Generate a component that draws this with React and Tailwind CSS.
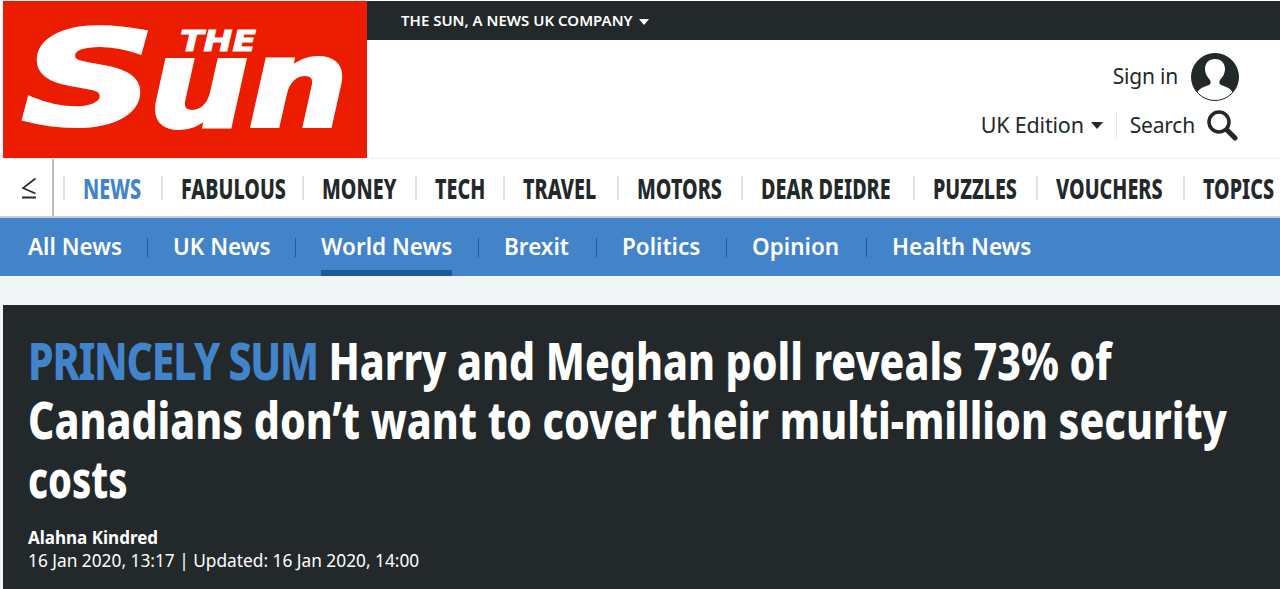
import React from 'react';

const sections = [
    { label: 'NEWS', width: 'w-[98px]', active: true },
    { label: 'FABULOUS', width: 'w-[141px]' },
    { label: 'MONEY', width: 'w-[113px]' },
    { label: 'TECH', width: 'w-[88px]' },
    { label: 'TRAVEL', width: 'w-[114px]' },
    { label: 'MOTORS', width: 'w-[124px]' },
    { label: 'DEAR DEIDRE', width: 'w-[172px]' },
    { label: 'PUZZLES', width: 'w-[123px]' },
    { label: 'VOUCHERS', width: 'w-[147px]' },
    { label: 'TOPICS .', width: 'w-[97px]' },
];

const subLinks = [
    { label: 'All News', width: 'w-[147px]', first: true },
    { label: 'UK News', width: 'w-[148px]' },
    { label: 'World News', width: 'w-[183px]', active: true },
    { label: 'Brexit', width: 'w-[118px]' },
    { label: 'Politics', width: 'w-[130px]' },
    { label: 'Opinion', width: 'w-[140px]' },
    { label: 'Health News', width: 'w-[170px]' },
];

const body = "font-['Noto_Sans',sans-serif]";
const squeezed = 'inline-block origin-left whitespace-nowrap';

function Logo() {
    return (
        <div className="w-[364px] h-[157px] shrink-0 bg-[#ec1c00]">
            <svg viewBox="0 0 364 157" className="w-full h-full" role="img" aria-label="The Sun">
                <g fill="#fff" stroke="#fff" fontStyle="italic" fontWeight="700" fontFamily="DejaVu Sans, sans-serif">
                    <text x="177" y="50" strokeWidth="1" fontSize="29" textLength="76" lengthAdjust="spacingAndGlyphs">THE</text>
                    <text x="19" y="123" strokeWidth="4" fontSize="130" textLength="133" lengthAdjust="spacingAndGlyphs">S</text>
                    <text x="146" y="125" strokeWidth="4" fontSize="122" textLength="199" lengthAdjust="spacingAndGlyphs">un</text>
                </g>
            </svg>
        </div>
    );
}

function UserIcon() {
    return (
        <svg viewBox="0 0 48 48" className="w-[48px] h-[48px]">
            <circle cx="24" cy="24" r="23.5" fill="#23282a" />
            <path d="M6 40c2-5 9-7 12-8 2-1 2-3 1-5-3-3-5-7-5-11 0-6 4-10 10-10s10 4 10 10c0 4-2 8-5 11-1 2-1 4 1 5 3 1 10 3 12 8-4 5-11 7.500-18 7.500S10 45 6 40z" fill="#fff" />
            <circle cx="24" cy="24" r="23.5" fill="none" stroke="#23282a" strokeWidth="1" />
        </svg>
    );
}

function SearchIcon() {
    return (
        <svg viewBox="0 0 32 32" className="w-[32px] h-[32px]" fill="none" stroke="#23282a">
            <circle cx="13" cy="13" r="10" strokeWidth="3.500" />
            <path d="M21 21l8 8" strokeWidth="5" strokeLinecap="round" />
        </svg>
    );
}

function BackIcon() {
    return (
        <svg viewBox="0 0 16 22" className="w-[16px] h-[22px] ml-[3px]" fill="none" stroke="#23282a" strokeWidth="1.600">
            <path d="M14.500 1.500L2 11l12.500 5.500" />
            <path d="M1 20.500h14" strokeWidth="2" />
        </svg>
    );
}

export default function App() {
    return (
        <div className="w-[1280px] h-[589px] overflow-hidden bg-[#f1f5f5] text-[#23282a]">
            <header className="flex pl-[3px] pt-px bg-white">
                <Logo />
                <div className="flex-1">
                    <div className={`h-[39px] bg-[#23282a] pl-[34px] flex items-center text-white text-[15px] font-semibold ${body}`}>
                        THE SUN, A NEWS UK COMPANY
                        <span className="ml-[6px] mt-[2px] w-0 h-0 border-x-[5px] border-x-transparent border-t-[6px] border-t-white" />
                    </div>
                    <div className={`h-[118px] pr-[42px] flex flex-col items-end tracking-[-0.2px] ${body}`}>
                        <div className="flex items-center mt-[13px] h-[48px] -mr-px">
                            <span className="text-[21px] mr-[13px]">Sign in</span>
                            <UserIcon />
                        </div>
                        <div className="flex items-center mt-[8px] h-[32px]">
                            <span className="text-[21.500px]">UK Edition</span>
                            <span className="ml-[7px] mr-[13px] w-0 h-0 border-x-[6px] border-x-transparent border-t-[7px] border-t-[#23282a]" />
                            <span className="text-[21px] pl-[13px] border-l border-[#e6e6e6] leading-[28px] mr-[11px]">Search</span>
                            <SearchIcon />
                        </div>
                    </div>
                </div>
            </header>
            <nav className="h-[60px] pl-[3px] flex items-stretch bg-white border-t border-[#eeeeee] border-b-2 border-b-[#c9ced0] overflow-hidden">
                <div className="w-[51px] shrink-0 border-r-2 border-[#bdbdbd] flex justify-center items-center">
                    <BackIcon />
                </div>
                <div className="flex items-center pl-[9px]">
                    {sections.map((s) => (
                        <div key={s.label} className={`${s.width} shrink-0 h-[24px] flex items-center pl-[18px] border-l-2 border-[#dfe2e3] text-[29px] font-extrabold ${body} ${s.active ? 'text-[#4283c9]' : 'text-[#23282a]'}`}>
                            <span className={`${squeezed} scale-x-[0.68]`}>{s.label}</span>
                        </div>
                    ))}
                </div>
            </nav>
            <div className={`h-[58px] bg-[#4283c9] flex items-center text-white text-[22.500px] font-semibold whitespace-nowrap ${body}`}>
                {subLinks.map((l) => (
                    <div key={l.label} className={`${l.width} shrink-0 h-full flex items-center ${l.first ? 'pl-[28px]' : ''}`}>
                        <span className={`h-[19px] border-l border-[#1f5a9c] ${l.first ? 'hidden' : 'mr-[25px]'}`} />
                        <span className={`h-full flex items-center border-b-[6px] pt-[6px] ${l.active ? 'border-[#1f5a94]' : 'border-transparent'}`}>{l.label}</span>
                    </div>
                ))}
            </div>
            <div className="h-[29px]" />
            <main className="ml-[3px] h-[284px] bg-[#23282a] pl-[25px] pt-[25px] text-white">
                <h1 className={`text-[52px] leading-[59px] font-extrabold ${body}`}>
                    <span className={`${squeezed} block scale-x-[0.788]`}>
                        <span className="text-[#4283c9] tracking-[-1.6px]">PRINCELY SUM</span> Harry and Meghan poll reveals 73% of
                    </span>
                    <span className={`${squeezed} block scale-x-[0.788]`}>Canadians don’t want to cover their multi-million security</span>
                    <span className={`${squeezed} block scale-x-[0.73]`}>costs</span>
                </h1>
                <p className={`mt-[19px] text-[17px] leading-[24px] font-bold ${body}`}>Alahna Kindred</p>
                <p className={`-mt-px text-[17.300px] leading-[24px] ${body}`}>16 Jan 2020, 13:17 | Updated: 16 Jan 2020, 14:00</p>
            </main>
        </div>
    );
}
